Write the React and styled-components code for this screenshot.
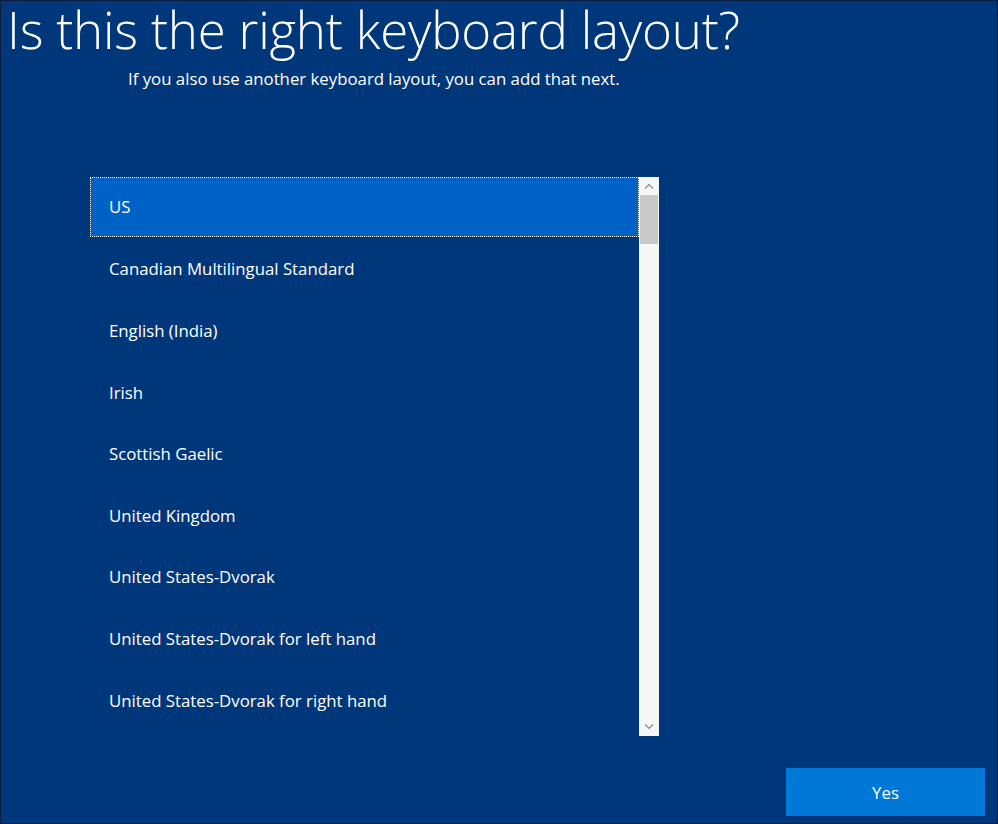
import React from "react";
import styled, { createGlobalStyle } from "styled-components";

const Global = createGlobalStyle`
  html, body { margin: 0; padding: 0; background: #00377a; }
  * { box-sizing: border-box; }
`;

const Screen = styled.div`
  width: 998px;
  height: 824px;
  background: #00377a;
  border: 1px solid #0b1d3d;
  font-family: "Open Sans", "Noto Sans", sans-serif;
  color: #ffffff;
  display: flex;
  flex-direction: column;
`;

const Title = styled.h1`
  margin: 0;
  padding: 0 0 0 6px;
  font-weight: 300;
  font-size: 51px;
  line-height: 56px;
  letter-spacing: -0.2px;
  white-space: nowrap;
`;

const Subtitle = styled.p`
  margin: 10px 0 0 127px;
  font-size: 16.8px;
  line-height: 24px;
  font-weight: 400;
`;

const Body = styled.div`
  flex: 1;
  display: flex;
  flex-direction: column;
  padding: 86px 12px 7px 89px;
`;

const ListBox = styled.div`
  width: 569px;
  height: 559px;
  display: flex;
`;

const Items = styled.ul`
  list-style: none;
  margin: 0;
  padding: 0;
  flex: 1;
  display: flex;
  flex-direction: column;
`;

const Item = styled.li`
  flex: none;
  display: flex;
  align-items: center;
  padding-left: 19px;
  padding-bottom: 1px;
  font-size: 16.8px;
  background: ${(p) => (p.$selected ? "#0062c6" : "transparent")};
  outline: ${(p) => (p.$selected ? "1px dotted #ffffff" : "none")};
  outline-offset: -1px;
  height: ${(p) => (p.$selected ? "60px" : "61.6px")};
  margin-bottom: ${(p) => (p.$selected ? "1.6px" : "0")};
`;

const Scrollbar = styled.div`
  width: 20px;
  flex: none;
  background: #f6f6f6;
  display: flex;
  flex-direction: column;
  align-items: stretch;
`;

const Arrow = styled.div`
  height: 18px;
  flex: none;
  display: flex;
  align-items: center;
  justify-content: center;
`;

const Thumb = styled.div`
  height: 49px;
  flex: none;
  margin: 0 1px;
  background: #c9c9c9;
`;

const Track = styled.div`
  flex: 1;
`;

const Footer = styled.div`
  margin-top: auto;
  display: flex;
  justify-content: flex-end;
`;

const YesButton = styled.button`
  width: 199px;
  height: 48px;
  border: none;
  background: #0078d7;
  color: #ffffff;
  font-family: "Open Sans", "Noto Sans", sans-serif;
  font-size: 16.8px;
  cursor: pointer;
`;

const Chevron = ({ up }) => (
  <svg width="10" height="6" viewBox="0 0 10 6">
    <path
      d={up ? "M1 5.5 L5 1.5 L9 5.5" : "M1 0.5 L5 4.5 L9 0.5"}
      fill="none"
      stroke="#8a8a8a"
      strokeWidth="1.2"
    />
  </svg>
);

const layouts = [
  "US",
  "Canadian Multilingual Standard",
  "English (India)",
  "Irish",
  "Scottish Gaelic",
  "United Kingdom",
  "United States-Dvorak",
  "United States-Dvorak for left hand",
  "United States-Dvorak for right hand",
];

export default function App() {
  return (
    <>
      <Global />
      <Screen>
        <Title>Is this the right keyboard layout?</Title>
        <Subtitle>If you also use another keyboard layout, you can add that next.</Subtitle>
        <Body>
          <ListBox>
            <Items>
              {layouts.map((l, i) => (
                <Item key={l} $selected={i === 0}>
                  {l}
                </Item>
              ))}
            </Items>
            <Scrollbar>
              <Arrow>
                <Chevron up />
              </Arrow>
              <Thumb />
              <Track />
              <Arrow>
                <Chevron />
              </Arrow>
            </Scrollbar>
          </ListBox>
          <Footer>
            <YesButton>Yes</YesButton>
          </Footer>
        </Body>
      </Screen>
    </>
  );
}
